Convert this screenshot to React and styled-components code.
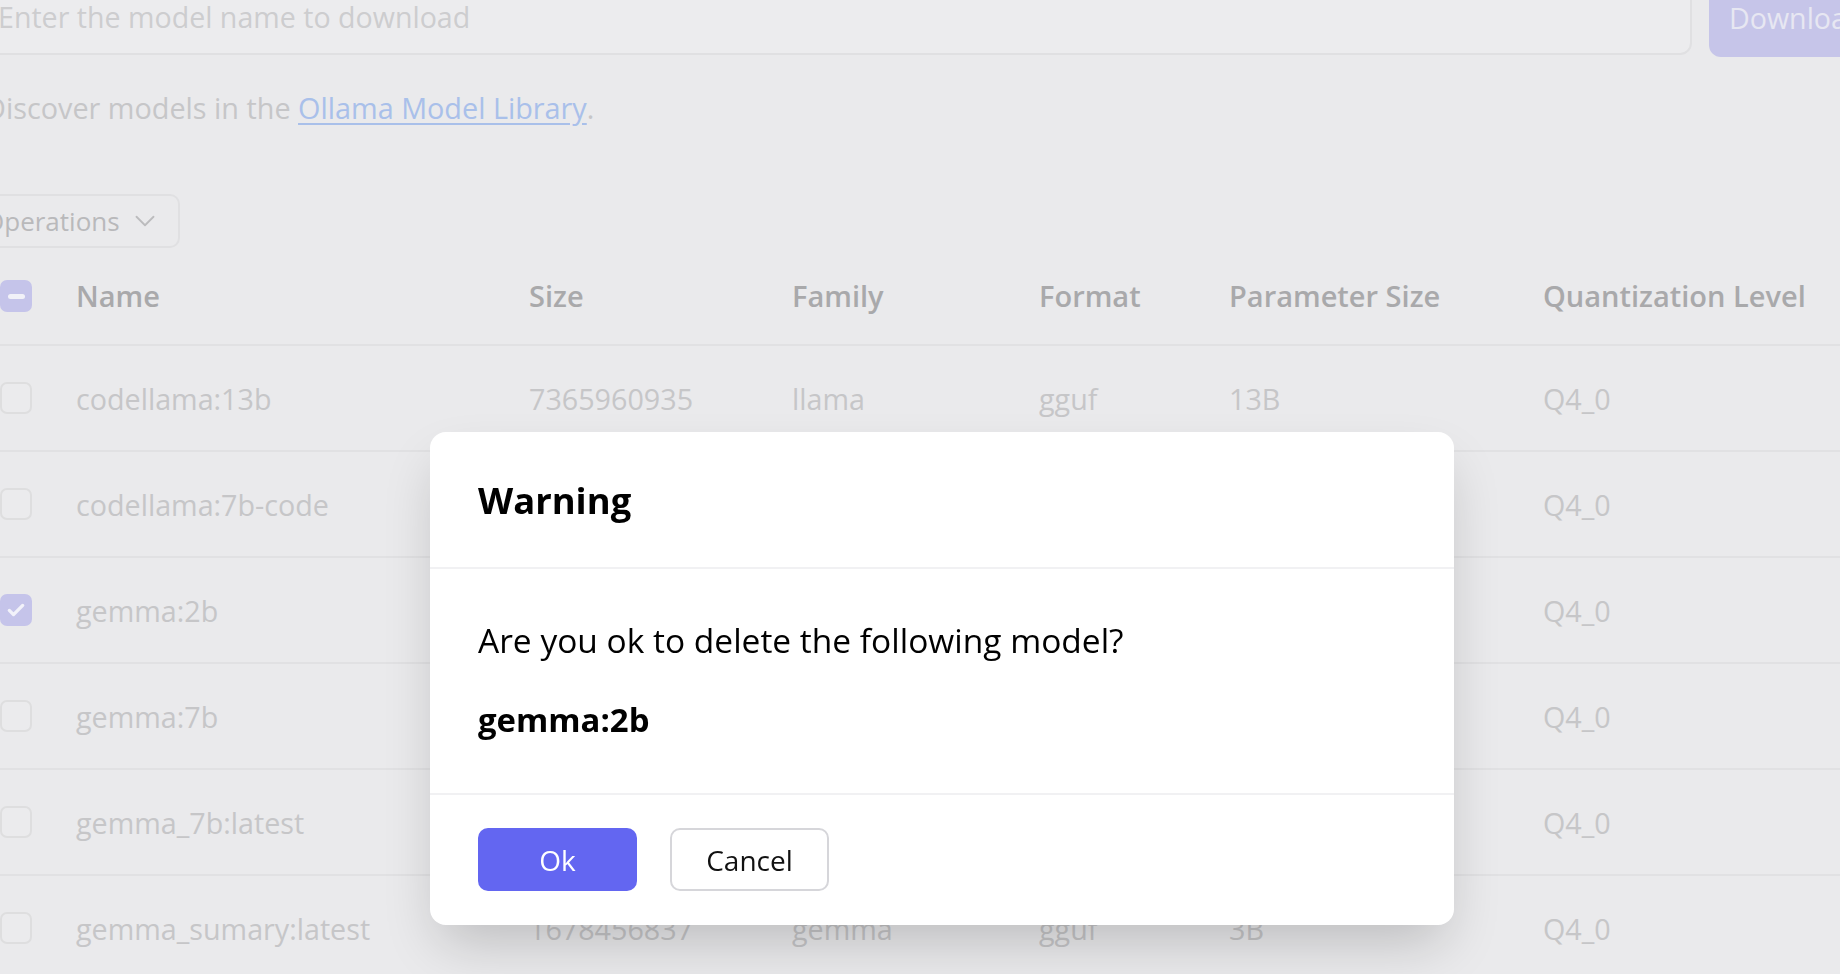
import React from 'react';
import styled, { createGlobalStyle } from 'styled-components';
import { ChevronDown } from 'lucide-react';

// Page wide defaults
const GlobalStyle = createGlobalStyle`
  html, body {
    margin: 0;
    padding: 0;
    overflow: hidden;
    background: #eaeaec;
  }
  body {
    font-family: "Open Sans", "Noto Sans", sans-serif;
  }
`;

const Page = styled.div`
  width: 1931px;
  margin-left: -42px;
  margin-top: -23px;
  height: 1000px;
`;

const DownloadRow = styled.div`
  display: flex;
  align-items: flex-start;
  gap: 17px;
`;

const ModelInput = styled.input`
  flex: 1;
  height: 78px;
  box-sizing: border-box;
  padding: 0 0 0 38px;
  border: 2px solid #e0e0e2;
  border-radius: 12px;
  background: #ececee;
  font-family: inherit;
  font-size: 28.6px;
  color: #c4c4c6;
  outline: none;
  &::placeholder {
    color: #cdcdcf;
  }
`;

const DownloadButton = styled.button`
  width: 180px;
  height: 80px;
  border: none;
  border-radius: 12px;
  background: #c6c5e9;
  color: #e7e7f2;
  font-family: inherit;
  font-size: 28.6px;
  text-align: left;
  padding: 0 0 0 20px;
`;

const Hint = styled.p`
  margin: 30px 0 0 27px;
  font-size: 28.8px;
  line-height: 42px;
  color: #c6c6c8;
`;

const LibraryLink = styled.a`
  color: #a9c0ea;
  text-decoration: underline;
  text-underline-offset: 4px;
`;

const OperationsButton = styled.button`
  margin-top: 65px;
  height: 54px;
  display: flex;
  align-items: center;
  gap: 8px;
  padding: 0 16px 0 24px;
  border: 2px solid #e0e0e2;
  border-radius: 10px;
  background: transparent;
  font-family: inherit;
  font-size: 26px;
  color: #b9b9bb;
`;

const Table = styled.div`
  padding-left: 42px;
`;

const columns = '76px 453px 263px 247px 190px 314px 1fr';

const HeadRow = styled.div`
  display: grid;
  grid-template-columns: ${columns};
  align-items: center;
  height: 98px;
  box-sizing: border-box;
  border-bottom: 2px solid #e1e1e3;
`;

const Row = styled.div`
  display: grid;
  grid-template-columns: ${columns};
  align-items: center;
  height: 106px;
  box-sizing: border-box;
  border-bottom: 2px solid #e1e1e3;
`;

const HeadCell = styled.div`
  font-size: 29px;
  font-weight: 600;
  color: #a9a9ab;
  white-space: nowrap;
  margin-top: -2px;
`;

const Cell = styled.div`
  font-size: 28.7px;
  color: #c6c6c8;
  white-space: nowrap;
`;

const Box = styled.span`
  width: 32px;
  height: 32px;
  box-sizing: border-box;
  border-radius: 7px;
  display: flex;
  align-items: center;
  justify-content: center;
  background: ${(p) => (p.$on ? '#c5c4ea' : '#ebebed')};
  border: ${(p) => (p.$on ? 'none' : '2px solid #dededf')};
`;

const Dash = styled.span`
  width: 17px;
  height: 5px;
  border-radius: 3px;
  background: #f1f1f8;
`;

// Dialog over the page
const Overlay = styled.div`
  position: fixed;
  inset: 0;
`;

const Dialog = styled.div`
  position: absolute;
  left: 430px;
  top: 432px;
  width: 1024px;
  background: #fff;
  border-radius: 16px;
  box-shadow: 0 26px 56px -10px rgba(0, 0, 0, 0.2);
  overflow: hidden;
`;

const DialogHeader = styled.div`
  height: 137px;
  box-sizing: border-box;
  padding: 0 48px;
  display: flex;
  align-items: center;
  border-bottom: 2px solid #f1f1f3;
`;

const Title = styled.h3`
  margin: 0;
  font-size: 36.4px;
  font-weight: 700;
  color: #000;
`;

const DialogBody = styled.div`
  padding: 47px 48px 49px;
  display: flex;
  flex-direction: column;
  gap: 30px;
  border-bottom: 2px solid #f1f1f3;
`;

const Message = styled.p`
  margin: 0;
  font-size: ${(p) => (p.$strong ? '32.9px' : '33.5px')};
  font-weight: ${(p) => (p.$strong ? 700 : 400)};
  line-height: 49px;
  color: #000;
`;

const DialogFooter = styled.div`
  padding: 33px 48px 34px;
  display: flex;
  gap: 33px;
`;

const ActionButton = styled.button`
  width: 159px;
  height: 63px;
  box-sizing: border-box;
  border-radius: 10px;
  font-family: inherit;
  font-size: 28px;
  background: ${(p) => (p.$primary ? '#6366f1' : '#fff')};
  color: ${(p) => (p.$primary ? '#fff' : '#111')};
  border: ${(p) => (p.$primary ? 'none' : '2px solid #d6d6da')};
`;

const models = [
  { name: 'codellama:13b', size: '7365960935', family: 'llama', format: 'gguf', params: '13B', quant: 'Q4_0' },
  { name: 'codellama:7b-code', size: '3825910662', family: 'llama', format: 'gguf', params: '7B', quant: 'Q4_0' },
  { name: 'gemma:2b', size: '1678456656', family: 'gemma', format: 'gguf', params: '3B', quant: 'Q4_0', checked: true },
  { name: 'gemma:7b', size: '5011853225', family: 'gemma', format: 'gguf', params: '9B', quant: 'Q4_0' },
  { name: 'gemma_7b:latest', size: '5011853225', family: 'gemma', format: 'gguf', params: '9B', quant: 'Q4_0' },
  { name: 'gemma_sumary:latest', size: '1678456837', family: 'gemma', format: 'gguf', params: '3B', quant: 'Q4_0' },
];

const Check = () => (
  <svg width="20" height="20" viewBox="0 0 24 24" fill="none" stroke="#f2f2fa" strokeWidth="4" strokeLinecap="round" strokeLinejoin="round">
    <path d="M4 12.5l5 5L20 6.5" />
  </svg>
);

const App = () => {
  return (
    <>
      <GlobalStyle />
      <Page>
        <DownloadRow>
          <ModelInput placeholder="Enter the model name to download" />
          <DownloadButton>Download</DownloadButton>
        </DownloadRow>
        <Hint>
          Discover models in the <LibraryLink href="#">Ollama Model Library</LibraryLink>.
        </Hint>
        <OperationsButton>
          Operations <ChevronDown size={34} strokeWidth={1.3} color="#bcbcbe" />
        </OperationsButton>
        <Table>
          <HeadRow>
            <Box $on><Dash /></Box>
            <HeadCell>Name</HeadCell>
            <HeadCell>Size</HeadCell>
            <HeadCell>Family</HeadCell>
            <HeadCell>Format</HeadCell>
            <HeadCell>Parameter Size</HeadCell>
            <HeadCell>Quantization Level</HeadCell>
          </HeadRow>
          {models.map((m) => (
            <Row key={m.name}>
              <Box $on={m.checked}>{m.checked && <Check />}</Box>
              <Cell>{m.name}</Cell>
              <Cell>{m.size}</Cell>
              <Cell>{m.family}</Cell>
              <Cell>{m.format}</Cell>
              <Cell>{m.params}</Cell>
              <Cell>{m.quant}</Cell>
            </Row>
          ))}
        </Table>
      </Page>
      <Overlay>
        <Dialog>
          <DialogHeader>
            <Title>Warning</Title>
          </DialogHeader>
          <DialogBody>
            <Message>Are you ok to delete the following model?</Message>
            <Message $strong>gemma:2b</Message>
          </DialogBody>
          <DialogFooter>
            <ActionButton $primary>Ok</ActionButton>
            <ActionButton>Cancel</ActionButton>
          </DialogFooter>
        </Dialog>
      </Overlay>
    </>
  );
};

export default App;
